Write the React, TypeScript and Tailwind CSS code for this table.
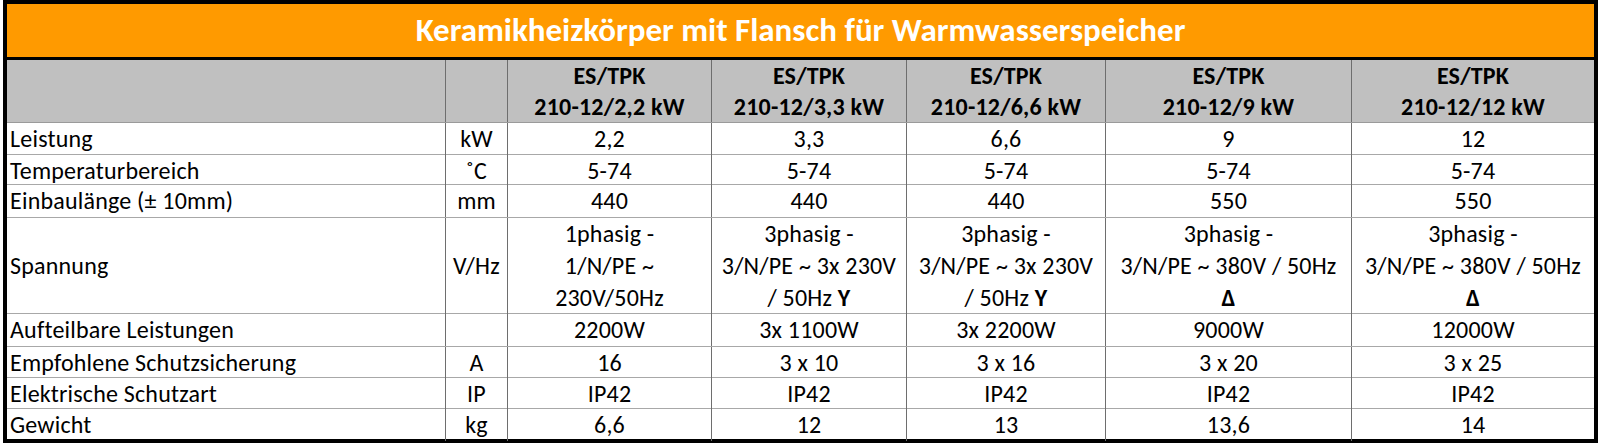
import React from "react";

const grid =
  "grid grid-cols-[439px_62px_204px_195px_199px_246px_242px]";

type Cell = React.ReactNode;

const rows: { h: string; cells: Cell[] }[] = [
  { h: "h-[32px]", cells: ["Leistung", "kW", "2,2", "3,3", "6,6", "9", "12"] },
  { h: "h-[30px]", cells: ["Temperaturbereich", "˚C", "5-74", "5-74", "5-74", "5-74", "5-74"] },
  { h: "h-[33px]", cells: ["Einbaulänge (± 10mm)", "mm", "440", "440", "440", "550", "550"] },
  {
    h: "h-[96px]",
    cells: [
      "Spannung",
      "V/Hz",
      <>
        <div>1phasig -</div>
        <div>1/N/PE ~</div>
        <div>230V/50Hz</div>
      </>,
      <>
        <div>3phasig -</div>
        <div>3/N/PE ~ 3x 230V</div>
        <div>
          / 50Hz <span className="font-bold">Y</span>
        </div>
      </>,
      <>
        <div>3phasig -</div>
        <div>3/N/PE ~ 3x 230V</div>
        <div>
          / 50Hz <span className="font-bold">Y</span>
        </div>
      </>,
      <>
        <div>3phasig -</div>
        <div>3/N/PE ~ 380V / 50Hz</div>
        <div className="font-bold">Δ</div>
      </>,
      <>
        <div>3phasig -</div>
        <div>3/N/PE ~ 380V / 50Hz</div>
        <div className="font-bold">Δ</div>
      </>,
    ],
  },
  { h: "h-[33px]", cells: ["Aufteilbare Leistungen", "", "2200W", "3x 1100W", "3x 2200W", "9000W", "12000W"] },
  { h: "h-[31px]", cells: ["Empfohlene Schutzsicherung", "A", "16", "3 x 10", "3 x 16", "3 x 20", "3 x 25"] },
  { h: "h-[31px]", cells: ["Elektrische Schutzart", "IP", "IP42", "IP42", "IP42", "IP42", "IP42"] },
  { h: "h-[30px]", cells: ["Gewicht", "kg", "6,6", "12", "13", "13,6", "14"] },
];

const heads = ["2,2", "3,3", "6,6", "9", "12"];

export default function App() {
  return (
    <div className="w-[1599px] h-[447px] bg-white font-['Carlito','Lato',sans-serif] text-black">
      <div className="ml-[3px] w-[1595px] border-[4px] border-black">
        <div className="h-[56px] bg-[#ff9a00] border-b-[3px] border-black flex items-center justify-center">
          <span className="text-white font-bold text-[33px] leading-none">
            Keramikheizkörper mit Flansch für Warmwasserspeicher
          </span>
        </div>
        <div className={`${grid} h-[63px] bg-[#c0c0c0] border-b border-[#9a9a9a]`}>
          <div className="border-r border-[#6e6e6e]" />
          <div className="border-r border-[#6e6e6e]" />
          {heads.map((h, i) => (
            <div
              key={h}
              className={`flex flex-col items-center justify-center font-bold text-[24px] leading-[31px] tracking-[0.2px] ${
                i < heads.length - 1 ? "border-r border-[#6e6e6e]" : ""
              }`}
            >
              <div>ES/TPK</div>
              <div>210-12/{h} kW</div>
            </div>
          ))}
        </div>
        {rows.map((r, ri) => (
          <div
            key={ri}
            className={`${grid} ${r.h} text-[24px] leading-[32px] tracking-[0.2px] ${
              ri < rows.length - 1 ? "border-b border-[#a8a8a8]" : ""
            }`}
          >
            {r.cells.map((c, ci) => (
              <div
                key={ci}
                className={`flex flex-col justify-center whitespace-nowrap ${
                  ci === 0 ? "items-start pl-[3px]" : "items-center text-center"
                } ${ci < 6 ? "border-r border-[#6e6e6e]" : ""}`}
              >
                {c}
              </div>
            ))}
          </div>
        ))}
      </div>
    </div>
  );
}
